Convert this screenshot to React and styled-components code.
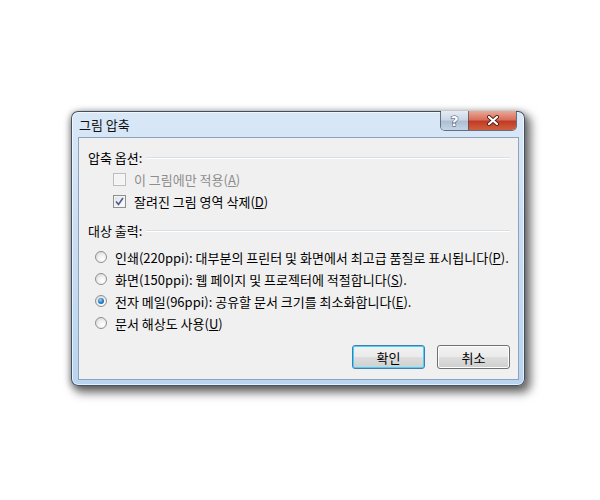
import React from 'react'
import styled, { createGlobalStyle } from 'styled-components'

const Global = createGlobalStyle`
  html, body {
    margin: 0;
    background: #ffffff;
  }
  body {
    font-family: "Noto Sans CJK KR", "Noto Sans", "Liberation Sans", sans-serif;
    font-size: 13px;
    color: #000;
  }
`

const Page = styled.div`
  width: 600px;
  height: 500px;
  padding: 111px 0 0 71px;
  box-sizing: border-box;
`

const Frame = styled.div`
  width: 454px;
  box-sizing: border-box;
  padding: 0 5px 5px 6px;
  border: 1px solid rgba(45, 55, 72, 0.85);
  border-radius: 7px;
  background: linear-gradient(180deg, #d9e8f7 0%, #cbdff4 40%, #b9d4f0 100%);
  box-shadow: 4px 5px 10px 2px rgba(0, 0, 0, 0.55), -1px 1px 6px rgba(0, 0, 0, 0.3),
    inset 0 0 0 1px rgba(255, 255, 255, 0.65);
`

const TitleBar = styled.div`
  height: 26px;
  display: flex;
  align-items: flex-start;
  margin-top: -1px;
`

const Title = styled.div`
  padding: 6px 0 0 1px;
  font-size: 13px;
  line-height: 16px;
  color: #111;
`

const Controls = styled.div`
  margin-left: auto;
  margin-right: 2px;
  display: flex;
  border: 1px solid rgba(60, 70, 90, 0.75);
  border-top: none;
  border-radius: 0 0 5px 5px;
  overflow: hidden;
`

const CaptionButton = styled.div`
  width: ${p => p.$w}px;
  height: 19px;
  display: flex;
  align-items: center;
  justify-content: center;
  background: ${p => p.$close
    ? 'linear-gradient(180deg, #e8a99a 0%, #d8705c 45%, #c13b24 55%, #d0603f 100%)'
    : 'linear-gradient(180deg, #e4ecf5 0%, #cad7e6 45%, #aebfd4 55%, #c4d4e6 100%)'};
  & + & {
    border-left: 1px solid rgba(60, 70, 90, 0.6);
  }
`

const HelpGlyph = styled.span`
  font-family: "DejaVu Sans", sans-serif;
  font-weight: bold;
  font-size: 14px;
  line-height: 1;
  color: #fff;
  -webkit-text-stroke: 1px #3a4a60;
  paint-order: stroke fill;
`

const Client = styled.div`
  background: #f0f0f0;
  border: 1px solid #8da2bb;
  padding: 8px 8px 10px 9px;
  display: flex;
  flex-direction: column;
`

const GroupHeader = styled.div`
  height: 22px;
  display: flex;
  align-items: center;
  gap: 4px;
  margin-top: ${p => p.$mt || 0}px;
  & > span {
    white-space: nowrap;
  }
  &::after {
    content: '';
    flex: 1;
    height: 0;
    border-top: 1px solid #d5dfe5;
    border-bottom: 1px solid #ffffff;
    margin-top: 2px;
  }
`

const OptionRow = styled.label`
  height: 22px;
  display: flex;
  align-items: center;
  padding-left: ${p => p.$indent}px;
  margin-top: ${p => p.$mt || 0}px;
  color: ${p => (p.$disabled ? '#8d8d8d' : '#000')};
  white-space: nowrap;
`

const Box = styled.span`
  width: 13px;
  height: 13px;
  box-sizing: border-box;
  border: 1px solid ${p => (p.$disabled ? '#bdbdbd' : '#8e8f8f')};
  background: ${p => p.$disabled
    ? '#f4f4f4'
    : 'linear-gradient(135deg, #dcdcdc 0%, #f4f4f4 60%, #ffffff 100%)'};
  box-shadow: inset 0 0 0 1px ${p => (p.$disabled ? '#f7f7f7' : '#f4f4f4')};
  display: flex;
  align-items: center;
  justify-content: center;
  margin-right: 8px;
  flex-shrink: 0;
`

const Radio = styled.span`
  width: 12px;
  height: 12px;
  box-sizing: border-box;
  border-radius: 50%;
  border: 1px solid #8e8f8f;
  background: radial-gradient(circle at 65% 70%, #ffffff 0%, #f2f2f2 40%, #d2d2d2 100%);
  display: flex;
  align-items: center;
  justify-content: center;
  margin-right: 8px;
  flex-shrink: 0;
  &::after {
    content: '';
    display: ${p => (p.$on ? 'block' : 'none')};
    width: 6px;
    height: 6px;
    border-radius: 50%;
    background: radial-gradient(circle at 40% 35%, #9fd2f5 0%, #2f86cc 45%, #114d8c 100%);
  }
`

const Key = styled.span`
  text-decoration: underline;
  text-underline-offset: 1px;
`

const Footer = styled.div`
  display: flex;
  justify-content: flex-end;
  gap: 12px;
  margin-top: 11px;
`

const Button = styled.button`
  width: 73px;
  height: 24px;
  font-family: inherit;
  font-size: 13px;
  color: #000;
  border-radius: 3px;
  border: 1px solid ${p => (p.$default ? '#3c7fb1' : '#707070')};
  background: linear-gradient(180deg, #f2f2f2 0%, #ebebeb 48%, #dddddd 52%, #cfcfcf 100%);
  box-shadow: inset 0 0 0 1px ${p => (p.$default ? '#48d2fb' : '#fcfcfc')};
  padding: 0;
`

const Check = () => (
  <svg width="9" height="9" viewBox="0 0 9 9">
    <path d="M1 4.5 L3.5 7.5 L8 1" fill="none" stroke="#4a5c94" strokeWidth="1.6" />
  </svg>
)

const CloseIcon = () => (
  <svg width="14" height="11" viewBox="0 0 14 11">
    <path d="M3 2 L11 9 M11 2 L3 9" stroke="#5a2018" strokeWidth="4" strokeLinecap="round" />
    <path d="M3 2 L11 9 M11 2 L3 9" stroke="#ffffff" strokeWidth="2.2" strokeLinecap="round" />
  </svg>
)

const outputs = [
  { id: 'print', text: '인쇄(220ppi): 대부분의 프린터 및 화면에서 최고급 품질로 표시됩니다(', key: 'P', tail: ').' },
  { id: 'screen', text: '화면(150ppi): 웹 페이지 및 프로젝터에 적절합니다(', key: 'S', tail: ').' },
  { id: 'mail', text: '전자 메일(96ppi): 공유할 문서 크기를 최소화합니다(', key: 'E', tail: ').', on: true },
  { id: 'doc', text: '문서 해상도 사용(', key: 'U', tail: ')' },
]

export default function App() {
  return (
    <Page>
      <Global />
      <Frame>
        <TitleBar>
          <Title>그림 압축</Title>
          <Controls>
            <CaptionButton $w={27}><HelpGlyph>?</HelpGlyph></CaptionButton>
            <CaptionButton $w={47} $close><CloseIcon /></CaptionButton>
          </Controls>
        </TitleBar>
        <Client>
          <GroupHeader><span>압축 옵션:</span></GroupHeader>
          <OptionRow $indent={25} $disabled>
            <Box $disabled />
            이 그림에만 적용(<Key>A</Key>)
          </OptionRow>
          <OptionRow $indent={25}>
            <Box><Check /></Box>
            잘려진 그림 영역 삭제(<Key>D</Key>)
          </OptionRow>
          <GroupHeader $mt={7}><span>대상 출력:</span></GroupHeader>
          {outputs.map((o, i) => (
            <OptionRow key={o.id} $indent={7} $mt={i === 0 ? 5 : 0}>
              <Radio $on={o.on} />
              {o.text}<Key>{o.key}</Key>{o.tail}
            </OptionRow>
          ))}
          <Footer>
            <Button $default>확인</Button>
            <Button>취소</Button>
          </Footer>
        </Client>
      </Frame>
    </Page>
  )
}
